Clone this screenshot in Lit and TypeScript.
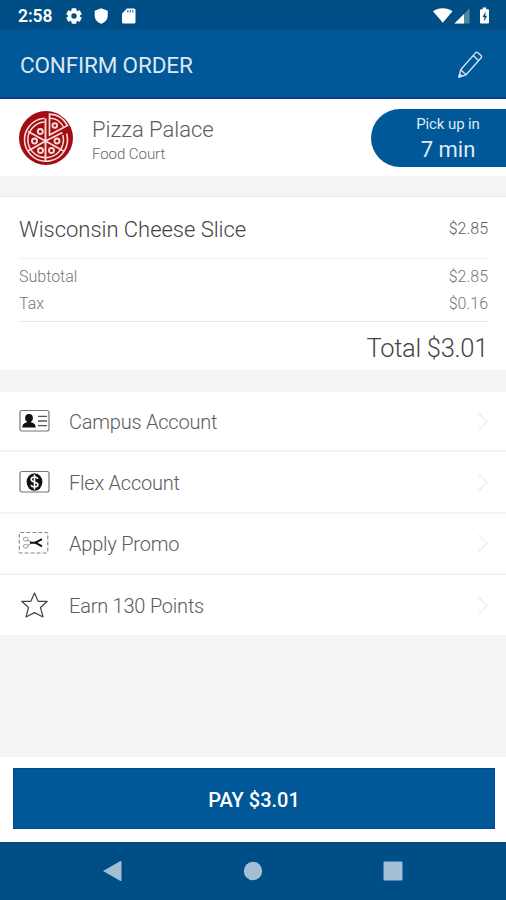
import { LitElement, html, css, svg } from "lit";
import { customElement, property } from "lit/decorators.js";

const slices = [0, 60, 120, 180, 240, 300];

const pizza = html`<svg width="54" height="54" viewBox="0 0 54 54" fill="none" stroke="#f6dcda">
  <circle cx="27" cy="27" r="27" fill="#a30c10" stroke="none" />
  <path d="M25.5 7.2A21.5 21.5 0 1 0 47.6 22.5" stroke-width="1.6" />
  <path d="M25.5 11A17.8 17.8 0 1 0 43.8 24" stroke-width="1.5" />
  <path d="M26.5 30V7.5M26.5 30V51M26.5 30L9 20.5M26.5 30L9 40M26.5 30L44.5 40M26.5 30L43.5 21.5" stroke-width="1.9" />
  <path d="M30.5 24V3.2C38 3.2 44.5 7.5 48.5 14.5Z" stroke-width="1.7" />
  <path d="M31 7.2C37 7.2 41.5 10.5 44.5 16" stroke-width="1.4" />
  <g stroke-width="1.9">
    <circle cx="21.3" cy="20.5" r="2.5" /><circle cx="15.5" cy="30" r="2.5" />
    <circle cx="21.5" cy="39.5" r="2.5" /><circle cx="32.5" cy="39.5" r="2.5" />
    <circle cx="38" cy="30" r="2.5" /><circle cx="35.8" cy="14.5" r="2.3" />
  </g>
</svg>`;

const icons: Record<string, unknown> = {
  campus: html`<svg width="32" height="24" viewBox="0 0 32 24">
    <rect x="2" y="1.5" width="29" height="20.5" rx="2" fill="none" stroke="#777" stroke-width="1.2" />
    <circle cx="11" cy="9" r="3.9" fill="#111" />
    <path d="M4.3 18.5C4.3 14.8 6.9 13.8 9 13.3V11H13V13.3C15.1 13.8 17.7 14.8 17.7 18.5Z" fill="#111" />
    <path d="M20 7.4H29M20 12H29M20 16.7H29" stroke="#555" stroke-width="1.3" />
  </svg>`,
  flex: html`<svg width="32" height="24" viewBox="0 0 32 24">
    <rect x="2" y="1.5" width="29" height="20.5" rx="2" fill="none" stroke="#777" stroke-width="1.2" />
    <ellipse cx="16.5" cy="12" rx="7.9" ry="8.7" fill="#111" />
    <path d="M19.9 8.8C19.3 7.5 18.1 7 16.5 7C14.4 7 13.2 8 13.2 9.4C13.2 12.6 19.9 11.2 19.9 14.6C19.9 16.1 18.5 17 16.5 17C14.6 17 13.5 16.3 13 15M16.5 4.5V19.5" fill="none" stroke="#fff" stroke-width="1.6" />
  </svg>`,
  promo: html`<svg width="32" height="24" viewBox="0 0 32 24" fill="none">
    <rect x="1.3" y="1.5" width="28.5" height="20.5" rx="1" stroke="#888" stroke-width="1.1" stroke-dasharray="4 2" />
    <ellipse cx="7.7" cy="8.2" rx="2.4" ry="1.8" stroke="#999" />
    <ellipse cx="7.7" cy="15.3" rx="2.4" ry="1.8" stroke="#999" />
    <path d="M9.9 9.2L13.2 11M9.9 14.3L13.2 12.4" stroke="#888" />
    <path d="M12 11.7H17.5M16.5 12.2L24 8.2M16.5 11.2L24 15.4" stroke="#111" stroke-width="2" />
  </svg>`,
  star: html`<svg width="32" height="28" viewBox="0 0 32 28" fill="none" stroke="#444" stroke-width="1.2" stroke-linejoin="round">
    <path d="M16.5 2L20.1 10.3H29.3L22.5 16.5L25 26L16.5 21.6L8 26L10.5 16.5L3.7 10.3H12.9Z" />
  </svg>`,
};

@customElement("option-row")
export class OptionRow extends LitElement {
  @property() label = "";
  @property() icon = "";

  static styles = css`
    :host {
      display: flex;
      align-items: center;
      box-sizing: border-box;
      padding: 0 17px 0 18px;
      color: #5c5c5c;
      font-size: 20px;
      font-weight: 300;
    }
    .icon {
      display: flex;
      width: 51px;
      flex: none;
    }
    .label {
      flex: 1;
      padding-top: 2px;
      white-space: nowrap;
      letter-spacing: -0.22px;
      line-height: 26px;
    }
    svg { display: block; }
  `;

  render() {
    return html`<span class="icon">${icons[this.icon]}</span>
      <span class="label">${this.label}</span>
      <svg width="12" height="20" viewBox="0 0 12 20" fill="none" stroke="#f1f1f1" stroke-width="1.8">
        <path d="M1.5 2L10 10.5L1.5 19" />
      </svg>`;
  }
}

@customElement("app-root")
export class AppRoot extends LitElement {
  static styles = css`
    :host {
      display: flex;
      flex-direction: column;
      width: 506px;
      height: 900px;
      overflow: hidden;
      background: #f4f4f4;
      font-family: Roboto, "Liberation Sans", sans-serif;
      font-weight: 300;
      color: #5c5c5c;
    }
    * { box-sizing: border-box; }
    svg { display: block; flex: none; }
    span { white-space: nowrap; }
    .status {
      display: flex;
      align-items: center;
      height: 30px;
      padding: 1px 14px 0 18px;
      background: #004e86;
      color: #fff;
      flex: none;
    }
    .clock {
      width: 47px;
      font-size: 17.5px;
      font-weight: 600;
      line-height: 20px;
      letter-spacing: -0.1px;
    }
    .grow { flex: 1; }
    .bar {
      display: flex;
      align-items: center;
      justify-content: space-between;
      height: 69px;
      padding: 2px 23px 0 20px;
      background: #005898;
      border-bottom: 2px solid #0a3c8c;
      color: #dfe6f3;
      flex: none;
    }
    .title { font-size: 22.5px; line-height: 28px; font-weight: 400; letter-spacing: -0.15px; }
    .vendor {
      display: flex;
      align-items: center;
      height: 77px;
      padding: 1px 0 0 19px;
      background: #fff;
      flex: none;
    }
    .names { display: flex; flex-direction: column; flex: 1; padding: 4px 0 0 19px; }
    .name { font-size: 22px; line-height: 27px; }
    .place { font-size: 15px; line-height: 22px; letter-spacing: -0.05px; color: #666; }
    .pickup {
      display: flex;
      flex-direction: column;
      align-items: center;
      width: 135px;
      height: 58px;
      padding: 5px 0 0 19px;
      border-radius: 29px 0 0 29px;
      background: #005898;
      color: #dfeaf5;
    }
    .when { font-size: 15px; line-height: 21px; font-weight: 400; letter-spacing: -0.1px; }
    .mins { font-size: 22px; line-height: 29px; font-weight: 400; }
    .order {
      height: 174px;
      margin-top: 20px;
      padding: 0 18px 0 19px;
      border-top: 1px solid #ececec;
      background: #fff;
      flex: none;
    }
    .line { display: flex; align-items: center; justify-content: space-between; }
    .item { height: 62px; padding-top: 2px; border-bottom: 1px solid #f0f0f0; }
    .sums { height: 63px; padding-top: 4px; border-bottom: 1px solid #e6e6e6; }
    .sums .line { height: 27px; }
    .product { padding-top: 2px; font-size: 22px; letter-spacing: -0.03px; color: #444; }
    .price { font-size: 16px; }
    .minor { font-size: 16px; color: #777; }
    .total { height: 48px; justify-content: flex-end; padding: 3px 0 0; font-size: 25.5px; letter-spacing: -0.3px; color: #444; }
    .options { display: flex; flex-direction: column; margin-top: 22px; background: #fff; flex: none; }
    .options option-row { height: 61.5px; border-bottom: 2px solid #f3f3f3; }
    .options .first { height: 60px; }
    .options .last { height: 60px; border: 0; }
    .footer { height: 85px; padding: 11px 11px 0 13px; background: #fff; flex: none; }
    .pay {
      display: block;
      width: 100%;
      height: 61px;
      padding: 2px 0 0;
      border: 1px solid #00489a;
      border-radius: 0;
      background: #005898;
      color: #fff;
      font: 500 20px Roboto, sans-serif;
    }
    .nav {
      display: flex;
      align-items: center;
      justify-content: space-between;
      height: 58px;
      padding: 0 103px 0 102px;
      background: #004e86;
      flex: none;
    }
  `;

  render() {
    return html`
      <div class="status">
        <span class="clock">2:58</span>
        <svg width="80" height="20" viewBox="0 0 80 20" fill="#fff">
          <g>
            ${slices.map((a) => svg`<rect x="6.5" y="2.2" width="5" height="6" rx="1" transform="rotate(${a} 9 10)" />`)}
            <circle cx="9" cy="10" r="4.3" fill="none" stroke="#fff" stroke-width="3.2" />
            <circle cx="9" cy="10" r="2.7" fill="#004e86" />
          </g>
          <path d="M36.2 2.2L42.7 4.8V9.8C42.7 13.8 39.8 16.5 36.2 17.7C32.6 16.5 29.7 13.8 29.7 9.8V4.8Z" />
          <path d="M62 2.5H69Q70.5 2.5 70.5 4V16Q70.5 17.5 69 17.5H58.5Q57 17.5 57 16V7.5Z" />
          <path d="M62.8 4V6.5M65.3 4V6.5M67.8 4V6.5" stroke="#4d83aa" stroke-width="1.3" />
        </svg>
        <span class="grow"></span>
        <svg width="60" height="20" viewBox="0 0 60 20">
          <path d="M1 5.2C6.5 1.2 15 1.2 20.5 5.2L10.8 16.8Z" fill="#fff" />
          <path d="M37.5 2.5V17.5H22.5Z" fill="#55879f" />
          <path d="M32 8V17.5H22.5Z" fill="#fff" />
          <path d="M49 3.2H50.7V1.5H54.3V3.2H56Q57 3.2 57 4.2V16.5Q57 17.5 56 17.5H49Q48 17.5 48 16.5V4.2Q48 3.2 49 3.2Z" fill="#fff" />
          <path d="M53.6 5.5L50.5 11H52.3V15.5L55 9.8H53.2Z" fill="#004e86" />
        </svg>
      </div>
      <header class="bar">
        <span class="title">CONFIRM ORDER</span>
        <svg width="26" height="28" viewBox="0 0 26 28" fill="none" stroke="#d3e1f1" stroke-width="1.4" stroke-linejoin="round">
          <path d="M2 26L3.7 18.8L18.7 1.6Q19.6 .8 20.6 1.6L24.2 4.8Q25 5.7 24.2 6.7L9 23.8Z" />
          <path d="M16.2 4.6L21.5 9.6M3.7 18.8L9 23.8" />
          <path d="M2 26L2.7 22.9L5 25Z" fill="#d3e1f1" />
        </svg>
      </header>
      <section class="vendor">
        ${pizza}
        <div class="names">
          <span class="name">Pizza Palace</span>
          <span class="place">Food Court</span>
        </div>
        <div class="pickup">
          <span class="when">Pick up in</span>
          <span class="mins">7 min</span>
        </div>
      </section>
      <section class="order">
        <div class="line item"><span class="product">Wisconsin Cheese Slice</span><span class="price">$2.85</span></div>
        <div class="sums">
          <div class="line minor"><span>Subtotal</span><span>$2.85</span></div>
          <div class="line minor"><span>Tax</span><span>$0.16</span></div>
        </div>
        <div class="line total"><span>Total $3.01</span></div>
      </section>
      <section class="options">
        <option-row class="first" icon="campus" label="Campus Account"></option-row>
        <option-row icon="flex" label="Flex Account"></option-row>
        <option-row icon="promo" label="Apply Promo"></option-row>
        <option-row class="last" icon="star" label="Earn 130 Points"></option-row>
      </section>
      <div class="grow"></div>
      <footer class="footer"><button class="pay">PAY $3.01</button></footer>
      <nav class="nav">
        <svg width="20" height="22" viewBox="0 0 20 22"><path d="M1 11L18 1.2Q19.5 .8 19.5 2V20Q19.5 21.2 18 20.8Z" fill="#a2bfd5" /></svg>
        <svg width="20" height="20" viewBox="0 0 20 20"><circle cx="10" cy="10" r="9.2" fill="#a2bfd5" /></svg>
        <svg width="20" height="20" viewBox="0 0 20 20"><rect x=".5" y=".5" width="19" height="19" rx="1.2" fill="#a2bfd5" /></svg>
      </nav>
    `;
  }
}
